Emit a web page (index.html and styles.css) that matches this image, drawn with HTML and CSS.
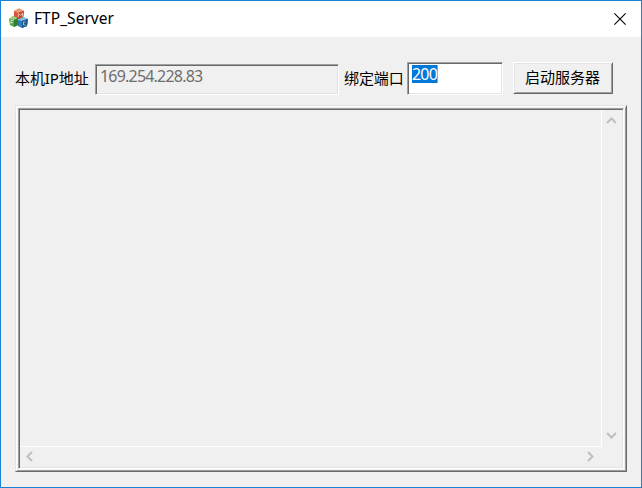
FILE: index.html
```html
<!DOCTYPE html>
<html lang="zh-CN">
<head>
<meta charset="utf-8">
<title>FTP_Server</title>
<link rel="stylesheet" href="styles.css">
</head>
<body>
<div class="window">
  <header class="titlebar">
    <svg class="app-icon" width="20" height="21" viewBox="0 0 20 21">
      <path d="M5 3L10 .5L15 3L14 10L9 11L5 9Z" fill="#d9563c"/>
      <path d="M5 3L10 .5L15 3L9 5Z" fill="#ed9a78"/>
      <path d="M9 5L15 3L14 10L9 11Z" fill="#c9412d"/>
      <path d="M0 11L4 8L9 10V17L5 19L1 17Z" fill="#57a447"/>
      <path d="M0 11L4 8L9 10L5 12Z" fill="#a1cf7d"/>
      <path d="M5 12L9 10V17L5 19Z" fill="#327d35"/>
      <path d="M9 12L14 9L19 11L18 18L13 20L9 18Z" fill="#2f7fb5"/>
      <path d="M9 12L14 9L19 11L13 13Z" fill="#83bfe0"/>
      <path d="M13 13L19 11L18 18L13 20Z" fill="#17598f"/>
      <path d="M9.500 9V5.500L11.500 7.500L13.500 5V8.500M2 16V12.500H4.500M2 14.500H4M16.500 14H14.500V17H16.500" fill="none" stroke="#f5eee6" stroke-width=".8" opacity=".8"/>
    </svg>
    <span class="title">FTP_Server</span>
    <svg class="close" width="12" height="12" viewBox="0 0 12 12"><path d="M.4 .4L11.600 11.600M11.600 .4L.4 11.600" stroke="#000" stroke-width="1.100"/></svg>
  </header>
  <main class="content">
    <div class="controls">
      <span class="label label-ip">本机IP地址</span>
      <div class="field ip">169.254.228.83</div>
      <span class="label label-port">绑定端口</span>
      <div class="field port"><span class="selected">200</span></div>
      <button class="start">启动服务器</button>
    </div>
    <div class="log-frame">
      <div class="log">
        <div class="view"></div>
        <div class="vbar">
          <svg width="11" height="7" viewBox="0 0 11 7"><path d="M1 6L5.500 1.500L10 6"/></svg>
          <svg width="11" height="7" viewBox="0 0 11 7"><path d="M1 1L5.500 5.500L10 1"/></svg>
        </div>
        <div class="hbar">
          <svg width="7" height="11" viewBox="0 0 7 11"><path d="M6 1L1.500 5.500L6 10"/></svg>
          <svg width="7" height="11" viewBox="0 0 7 11"><path d="M1 1L5.500 5.500L1 10"/></svg>
        </div>
      </div>
    </div>
  </main>
</div>
</body>
</html>
```
FILE: styles.css
```css
* { box-sizing: border-box; }
body {
  margin: 0;
  font-family: "Noto Sans", "Noto Sans CJK SC", sans-serif;
}
.window {
  width: 642px;
  height: 488px;
  border: 1px solid #1883d7;
  background: #f0f0f0;
}
.titlebar {
  display: flex;
  align-items: center;
  height: 36px;
  padding: 0 15px 0 8px;
  background: #fff;
}
.app-icon { margin-top: -2px; }
.title {
  margin: -2px 0 0 5px;
  font-size: 15.5px;
  line-height: 20px;
  letter-spacing: .04px;
}
.close { margin-left: auto; }
.content { padding: 25px 14px 0; }
.controls {
  display: flex;
  align-items: flex-start;
  height: 43px;
}
.label {
  margin-top: 6px;
  font-size: 15px;
  line-height: 20px;
  letter-spacing: -.1px;
  white-space: nowrap;
}
.label-ip { width: 80px; }
.label-port { width: 63px; margin-left: 5px; }
.field {
  border: 1px solid;
  border-color: #a0a0a0 #fff #fff #a0a0a0;
  box-shadow: inset 1px 1px #696969, inset -1px -1px #e3e3e3;
  font-family: "Noto Sans", sans-serif;
  font-size: 16px;
  line-height: 18px;
  letter-spacing: -.8px;
}
.ip {
  width: 244px;
  height: 31px;
  margin-top: 2px;
  padding: 2px 4px;
  color: #6d6d6d;
}
.port {
  width: 96px;
  height: 33px;
  padding: 2px 4px;
  background: #fff;
}
.selected {
  display: inline-block;
  height: 18px;
  background: #0078d7;
  color: #fff;
  border-right: 1px solid #ff8728;
}
.start {
  width: 100px;
  height: 32px;
  margin-left: 10px;
  padding: 0 1px 3px 0;
  border: 1px solid;
  border-color: #fff #696969 #696969 #fff;
  box-shadow: inset 1px 1px #e3e3e3, inset -1px -1px #a0a0a0;
  background: #f0f0f0;
  color: #000;
  font-family: inherit;
  font-size: 15px;
}
.log-frame {
  width: 612px;
  height: 367px;
  padding: 2px;
  border: 1px solid;
  border-color: #e3e3e3 #696969 #696969 #e3e3e3;
  box-shadow: inset 1px 1px #fff, inset -1px -1px #a0a0a0;
}
.log {
  display: grid;
  grid-template: 338px 21px / 583px 21px;
  height: 361px;
  border: 1px solid;
  border-color: #a0a0a0 #fff #fff #a0a0a0;
  box-shadow: inset 1px 1px #696969, inset -1px -1px #e3e3e3;
}
.view {
  border-right: 1px solid #fff;
  border-bottom: 1px solid #fff;
  margin: 1px 0 0 1px;
}
.vbar, .hbar {
  display: flex;
  justify-content: space-between;
}
.vbar { flex-direction: column; padding: 8px 4px 8px; }
.hbar { padding: 4px 8px 4px 7px; }
.log path { fill: none; stroke: #bfbfbf; stroke-width: 2; }
```
